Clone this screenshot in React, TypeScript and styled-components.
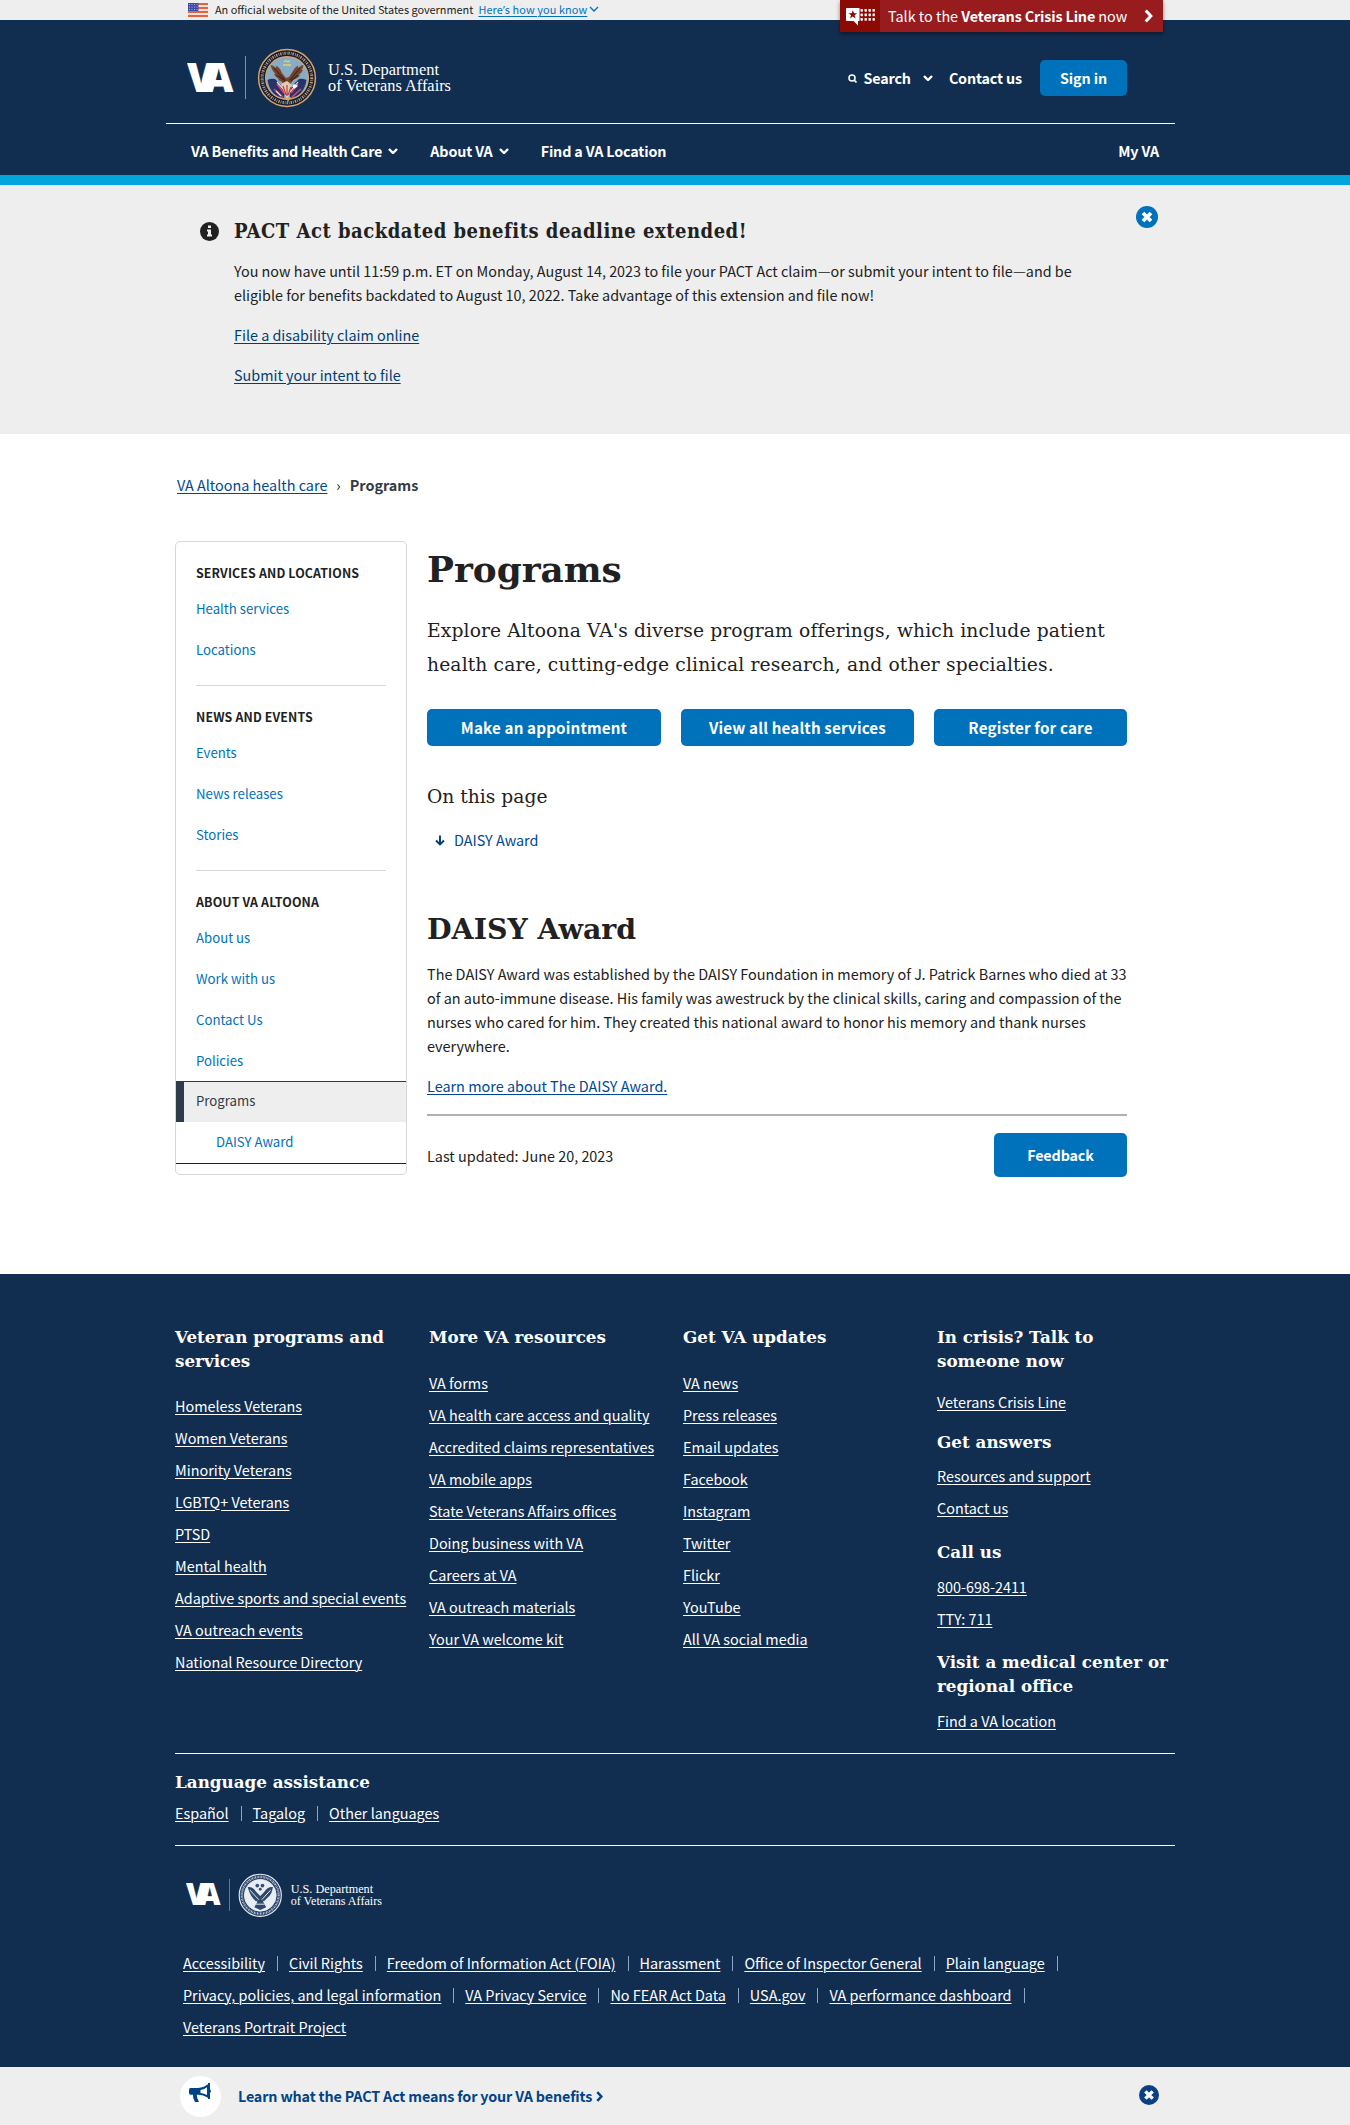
import React from "react";
import styled, { createGlobalStyle } from "styled-components";

const sans = `"Noto Sans CJK SC", "Open Sans", sans-serif`;
const slab = `"DejaVu Serif", serif`;
const slabNarrow = `"DejaVu Serif Condensed", "DejaVu Serif", serif`;

const GlobalStyle = createGlobalStyle`
  * { box-sizing: border-box; }
  body { margin: 0; background: #fff; color: #212121; font-family: ${sans}; font-size: 14.4px; line-height: 24px; }
  h1, h2, h3, h4, p, ul { margin: 0; padding: 0; }
  ul { list-style: none; }
  svg { display: block; flex: none; }
`;

/* ---------- shared ---------- */

const Link = styled.a<{ $color?: string }>`
  color: ${(p) => p.$color || "#004795"};
  text-decoration: underline;
  text-underline-offset: 2px;
  text-decoration-thickness: 1px;
  white-space: nowrap;
`;

const Button = styled.button<{ $w: number; $h: number; $size?: number; $ls?: number }>`
  width: ${(p) => p.$w}px;
  height: ${(p) => p.$h}px;
  padding: 0 0 ${(p) => (p.$size ? 2 : 1)}px;
  border: 0;
  border-radius: 5px;
  background: #0071bb;
  color: #fff;
  font: bold ${(p) => p.$size || 14.32}px/24px ${sans};
  letter-spacing: ${(p) => (p.$ls === undefined ? -0.13 : p.$ls)}px;
  white-space: nowrap;
`;

const Chevron = ({ w = 10, stroke = 2.4, color = "#fff" }: { w?: number; stroke?: number; color?: string }) => (
  <svg width={w} height={w * 0.65} viewBox="0 0 10 6.5">
    <path d="M1 1 L5 5 L9 1" fill="none" stroke={color} strokeWidth={stroke} />
  </svg>
);

const RightChevron = ({ w, h, color, stroke }: { w: number; h: number; color: string; stroke: number }) => (
  <svg width={w} height={h} viewBox="0 0 8 13">
    <path d="M1.4 1.4 L6.2 6.5 L1.4 11.6" fill="none" stroke={color} strokeWidth={stroke} />
  </svg>
);

const CloseIcon = ({ size, color }: { size: number; color: string }) => (
  <svg width={size} height={size} viewBox="0 0 22 22">
    <circle cx="11" cy="11" r="11" fill={color} />
    <path d="M7 7 L15 15 M15 7 L7 15" stroke="#fff" strokeWidth="3.8" />
  </svg>
);

/* ---------- government banner ---------- */

const GovBar = styled.div`
  height: 20px;
  padding: 0 0 1px 188px;
  display: flex;
  align-items: center;
  background: #eee;
  font-size: 10.9px;
  line-height: 19px;
  color: #212121;
  white-space: nowrap;
  & > svg:first-child { margin: 1px 7px 0 0; }
  & > a { margin: 0 2px 0 5px; letter-spacing: 0.1px; }
`;

const Apostrophe = styled.span`
  font-family: "Open Sans", sans-serif;
`;

const Flag = () => (
  <svg width="20" height="14" viewBox="0 0 20 14">
    <rect width="20" height="14" fill="#f4e3dc" />
    {[0, 4, 8, 12].map((y) => (
      <rect key={y} y={y} width="20" height="2" fill="#e8613f" />
    ))}
    <rect width="10.5" height="8" fill="#3b4ba8" />
    {[1.5, 4, 6.5].map((y) =>
      [1.5, 4, 6.5, 9].map((x) => <circle key={`${x}${y}`} cx={x} cy={y} r=".5" fill="#c9cfee" />)
    )}
  </svg>
);

/* ---------- crisis line ---------- */

const CrisisLine = styled.div`
  position: absolute;
  top: 0;
  left: 840px;
  width: 323px;
  height: 32px;
  display: flex;
  align-items: center;
  background: #981b1e;
  color: #fff;
  box-shadow: 0 2px 4px rgba(0, 0, 0, 0.45);
  white-space: nowrap;
`;

const CrisisIcon = styled.span`
  width: 40px;
  height: 32px;
  margin-right: 8px;
  padding: 8px 0 0 6px;
  background: #8b0a03;
`;

const CrisisText = styled.span`
  flex: none;
  width: 256px;
  & > b { letter-spacing: -0.17px; }
`;

/* ---------- header ---------- */

const Header = styled.header`
  height: 165px;
  padding: 0 175px 0 166px;
  background: #112e51;
  border-bottom: 10px solid #00a6dc;
  color: #fff;
  font-size: 14.32px;
  font-weight: bold;
  letter-spacing: -0.14px;
`;

const HeaderTop = styled.div`
  height: 104px;
  padding: 13px 48px 0 21px;
  border-bottom: 1px solid #fff;
  display: flex;
  align-items: center;
`;

const Tools = styled.div`
  margin-left: auto;
  display: flex;
  align-items: center;
  white-space: nowrap;
  & > span { margin-left: 6px; }
  & > span + svg { margin-left: 12px; }
  & > svg + span + svg + span { margin: 0 18px 0 16px; }
`;

const Nav = styled.nav`
  height: 51px;
  padding: 3px 16px 0 25px;
  display: flex;
  align-items: center;
  white-space: nowrap;
`;

const NavItem = styled.span<{ $gap?: number; $right?: boolean }>`
  display: flex;
  align-items: center;
  gap: 6px;
  margin-left: ${(p) => (p.$right ? "auto" : `${p.$gap || 0}px`)};
`;

const Ring = ({ mono }: { mono?: boolean }) => {
  const edge = mono ? "#e8edf4" : "#d9a566";
  const letter = mono ? "#c5d0de" : "#b9a07c";
  return (
    <g>
      <circle cx="30" cy="30" r="28.4" fill={mono ? "#2a4467" : "#141c33"} stroke={edge} strokeWidth="1.5" />
      <circle cx="30" cy="30" r="24.8" fill="none" stroke={letter} strokeWidth="3" strokeDasharray="1.3 1.2 .7 1" />
      <circle cx="30" cy="30" r="21.4" fill={mono ? "#e8edf4" : "#88abc6"} stroke={edge} strokeWidth="1.2" />
    </g>
  );
};

const ColorSeal = () => (
  <g>
    <Ring />
    <path d="M10.5 32 Q14 30 18 31 L28 41 L27 50 Q13 48 10.5 32Z" fill="#27346c" />
    <path d="M49.5 32 Q45 30 42 31 L32 41 L33 50 Q47 48 49.5 32Z" fill="#27346c" />
    <path d="M20 36 L27 45 M17 41 L26 49 M41 36 L34 45 M44 41 L35 49" stroke="#d8495d" strokeWidth="1.6" />
    <path d="M20 34 L28 43 M41 34 L33 44 M19 43 L24 48" stroke="#f0dfe4" strokeWidth="1.2" />
    <path d="M13.5 17 Q16 17 19 20 L19.5 17.5 Q23 20 25 25 L29 30 L32 29 L36 23 Q38 19 41 17.5 L41 20 Q44 17 46.5 17 Q46 20 44.5 22 L46 22 Q44 26 41.5 27 L43 27.5 Q40 31 36 32 L33 37 L26 36 Q25 33 21 32 L22 31 Q18 29 17 26 L18.5 26 Q15 23 13.5 17Z" fill="#75462b" />
    <path d="M17 20 L28 32 M20 27 L28 33 M43 20 L33 32 M41 27 L34 33" stroke="#3d241d" strokeWidth="1.1" />
    <path d="M24 36 L30 33 L35 37 L33 45 L30 52 L27 44Z" fill="#e2cfb0" />
    <path d="M26 38 L29 47 M30 37 L30 48 M34 39 L31 47" stroke="#c4393f" strokeWidth="1.2" />
    <path d="M37 36 L41 38 L37 41 L35 38Z" fill="#fff" />
    <path d="M29 50 L31 54 L34 49Z" fill="#d9a94b" />
    <path d="M27 14 L29 12.5 L31 14 L33 12.5 M26 17 L34 17" stroke="#dfd36e" strokeWidth="1.3" fill="none" />
  </g>
);

const MonoSeal = () => (
  <g>
    <Ring mono />
    <path d="M13 19 Q20 18 25 26 L30 31 L35 26 Q40 18 47 19 Q46 29 40 33 L34 39 L38 46 L30 50 L22 46 L26 39 Q17 34 13 19Z" fill="#2f496c" />
    <path d="M16 23 L28 36 M44 23 L32 36 M24 42 L36 42 M18 44 L26 38 M42 44 L34 38" stroke="#e8edf4" strokeWidth="1.3" />
    <circle cx="26" cy="17" r="2.5" fill="#38516f" />
    <circle cx="33" cy="17" r="2.5" fill="#38516f" />
    <circle cx="30" cy="22" r="2" fill="#38516f" />
  </g>
);

const Logo = ({ width, mono }: { width: number; mono?: boolean }) => (
  <svg width={width} height={(width * 60) / 268} viewBox="0 0 268 60">
    <text x="0" y="43.6" fill="#fff" fontFamily="Open Sans" fontWeight="800" fontSize="40.5" letterSpacing="0" textLength="46.5" lengthAdjust="spacing">
      VA
    </text>
    <rect x="58" y="8" width="1" height="43" fill="#8193aa" />
    <g transform="translate(70 0)">{mono ? <MonoSeal /> : <ColorSeal />}</g>
    <g fill="#fff" fontFamily="Liberation Serif" fontSize="16.5" fontWeight="400" letterSpacing="0">
      <text x="141" y="26.5" textLength="111" lengthAdjust="spacingAndGlyphs">
        U.S. Department
      </text>
      <text x="141" y="43" textLength="123" lengthAdjust="spacingAndGlyphs">
        of Veterans Affairs
      </text>
    </g>
  </svg>
);

/* ---------- promo banner ---------- */

const Promo = styled.section`
  height: 249px;
  padding: 0 192px 0 200px;
  display: flex;
  align-items: flex-start;
  background: #eee;
  & > svg:first-child { margin: 37px 15px 0 0; }
  & > svg:last-child { margin: 21px 0 0 auto; }
`;

const PromoBody = styled.div`
  width: 860px;
  padding-top: 33px;
  & p { margin-top: 16px; font-size: 14.37px; }
`;

const PromoTitle = styled.h3`
  margin-bottom: -1px;
  font: bold 20px/26px ${slabNarrow};
  letter-spacing: 0.5px;
`;

/* ---------- page ---------- */

const Breadcrumb = styled.nav`
  height: 107px;
  padding: 39px 0 0 177px;
  display: flex;
  gap: 9px;
  & > b { color: #323a45; }
`;

const Page = styled.div`
  padding: 0 223px 97px 175px;
  display: flex;
  align-items: flex-start;
  gap: 20px;
`;

const Sidebar = styled.aside`
  width: 232px;
  padding-bottom: 10px;
  border: 1px solid #d6d7d9;
  border-radius: 5px;
`;

const SideSection = styled.section<{ $last?: boolean }>`
  padding-top: 22px;
  & > h2 { margin: 0 0 6px 20px; font-size: 12.4px; line-height: 18px; letter-spacing: 0.13px; }
  &::after {
    content: "";
    display: ${(p) => (p.$last ? "none" : "block")};
    height: 1px;
    margin: 15px 20px 0;
    background: #d6d7d9;
  }
`;

const SideLink = styled.a<{ $active?: boolean; $child?: boolean }>`
  display: block;
  height: 41px;
  padding-left: ${(p) => (p.$child ? 40 : p.$active ? 12 : 20)}px;
  font-size: 13.2px;
  line-height: ${(p) => (p.$child || p.$active ? 40 : 41)}px;
  color: ${(p) => (p.$active ? "#323a45" : "#0071bb")};
  ${(p) =>
    p.$active &&
    `background: #eee; border-left: 8px solid #2e3b48; box-shadow: inset 0 1px #323a45;`}
  ${(p) => p.$child && `height: 42px; border-bottom: 1px solid #212121;`}
`;

const Content = styled.main`
  width: 700px;
  padding-top: 3px;
`;

const Title = styled.h1`
  font: bold 35.8px/50px ${slab};
`;

const Lead = styled.p`
  margin-top: 20px;
  font: 18.7px/34px ${slab};
  letter-spacing: 0.13px;
  white-space: nowrap;
`;

const ButtonRow = styled.div`
  margin-top: 27px;
  display: flex;
  gap: 20px;
`;

const JumpTitle = styled.h2`
  margin-top: 38px;
  font: 18.7px/26px ${slab};
`;

const JumpLink = styled.a`
  margin: 18px 0 0 8px;
  display: flex;
  align-items: center;
  gap: 9px;
  color: #004795;
`;

const SectionTitle = styled.h2`
  margin: 57px 0 13px;
  font: bold 28.4px/40px ${slab};
`;

const Text = styled.p`
  font-size: 14.43px;
  white-space: nowrap;
  & + & { margin-top: 16px; }
`;

const Updated = styled.div`
  margin-top: 16px;
  padding-top: 17px;
  border-top: 2px solid #aeb0b5;
  display: flex;
  justify-content: space-between;
  align-items: center;
  & > span { padding-top: 2px; }
`;

/* ---------- footer ---------- */

const Footer = styled.footer`
  height: 793px;
  padding: 52px 175px 0;
  background: #112e51;
  color: #fff;
`;

const Columns = styled.div`
  height: 428px;
  display: grid;
  grid-template-columns: 254px 254px 254px 238px;
  border-bottom: 1px solid #fff;
`;

const FootTitle = styled.h2<{ $top?: number; $bottom?: number }>`
  margin: ${(p) => p.$top || 0}px 0 ${(p) => (p.$bottom === undefined ? 21.5 : p.$bottom)}px;
  font: bold 16.75px/23.5px ${slab};
  white-space: nowrap;
`;

const FootList = styled.ul`
  display: grid;
  gap: 8px;
`;

const Language = styled.section`
  height: 92px;
  padding-top: 16.5px;
  border-bottom: 1px solid #fff;
`;

const Inline = styled.ul<{ $inset?: boolean }>`
  margin: ${(p) => (p.$inset ? "33px 0 0 8px" : 0)};
  display: flex;
  flex-wrap: wrap;
  row-gap: 8px;
`;

const InlineItem = styled.li<{ $bar: boolean }>`
  display: flex;
  align-items: center;
  &::after {
    content: "";
    display: ${(p) => (p.$bar ? "block" : "none")};
    width: 1px;
    height: 15px;
    margin: 1px 11px 0 12px;
    background: #8ba6ca;
  }
`;

const FooterLogo = styled.div`
  padding: 27px 0 0 11px;
`;

const BottomBar = styled.div`
  height: 58px;
  padding: 0 192px 0 180px;
  display: flex;
  align-items: center;
  background: #eee;
  color: #004386;
  font-size: 14.32px;
  font-weight: bold;
  letter-spacing: -0.15px;
  & > span { margin: 0 4px 0 17px; }
  & > svg:last-child { margin: 0 -1px 2px auto; }
`;

const Badge = styled.div`
  width: 41px;
  height: 41px;
  border-radius: 50%;
  background: #fff;
  display: flex;
  align-items: center;
  justify-content: center;
  padding-bottom: 6px;
`;

const sections = [
  { title: "SERVICES AND LOCATIONS", links: ["Health services", "Locations"] },
  { title: "NEWS AND EVENTS", links: ["Events", "News releases", "Stories"] },
  { title: "ABOUT VA ALTOONA", links: ["About us", "Work with us", "Contact Us", "Policies"] },
];

const programs = ["Homeless Veterans", "Women Veterans", "Minority Veterans", "LGBTQ+ Veterans", "PTSD", "Mental health", "Adaptive sports and special events", "VA outreach events", "National Resource Directory"];
const resources = ["VA forms", "VA health care access and quality", "Accredited claims representatives", "VA mobile apps", "State Veterans Affairs offices", "Doing business with VA", "Careers at VA", "VA outreach materials", "Your VA welcome kit"];
const updates = ["VA news", "Press releases", "Email updates", "Facebook", "Instagram", "Twitter", "Flickr", "YouTube", "All VA social media"];
const legal = ["Accessibility", "Civil Rights", "Freedom of Information Act (FOIA)", "Harassment", "Office of Inspector General", "Plain language", "Privacy, policies, and legal information", "VA Privacy Service", "No FEAR Act Data", "USA.gov", "VA performance dashboard", "Veterans Portrait Project"];

const LinkList = ({ items }: { items: string[] }) => (
  <FootList>
    {items.map((t) => (
      <li key={t}>
        <Link $color="#fff">{t}</Link>
      </li>
    ))}
  </FootList>
);

const InlineList = ({ items, inset }: { items: string[]; inset?: boolean }) => (
  <Inline $inset={inset}>
    {items.map((t, i) => (
      <InlineItem key={t} $bar={i < items.length - 1}>
        <Link $color="#fff">{t}</Link>
      </InlineItem>
    ))}
  </Inline>
);

export default function App() {
  return (
    <>
      <GlobalStyle />
      <GovBar>
        <Flag />
        An official website of the United States government
        <Link $color="#0071bb">Here<Apostrophe>’</Apostrophe>s how you know</Link>
        <Chevron w={10} stroke={1.3} color="#0071bb" />
      </GovBar>
      <CrisisLine>
        <CrisisIcon>
          <svg width="29" height="18" viewBox="0 0 29 18">
            <path d="M1 0h12.5v13h-1.5v4.5L7.5 13H1a1 1 0 0 1-1-1V1a1 1 0 0 1 1-1z" fill="#fff" />
            <path d="M6.8 2.3l1.2 3h3.1L8.6 7.2l1 3.2-2.8-1.9L4 10.4l1-3.2L2.5 5.3h3.1z" fill="#8b0a03" />
            {[1, 5.5, 10].map((y) => [15, 19, 23, 27].map((x) => <rect key={`${x}-${y}`} x={x - 0.5} y={y} width="2.4" height="2.7" rx=".6" fill="#fff" />))}
          </svg>
        </CrisisIcon>
        <CrisisText>
          Talk to the <b>Veterans Crisis Line</b> now
        </CrisisText>
        <RightChevron w={9} h={14} color="#fff" stroke={2.8} />
      </CrisisLine>

      <Header>
        <HeaderTop>
          <Logo width={268} />
          <Tools>
            <svg width="9" height="9" viewBox="0 0 9 9">
              <circle cx="4" cy="4" r="3" fill="none" stroke="#fff" strokeWidth="1.5" />
              <path d="M6 6 L8.5 8.5" stroke="#fff" strokeWidth="1.7" />
            </svg>
            <span>Search</span>
            <Chevron />
            <span>Contact us</span>
            <Button $w={87} $h={36}>Sign in</Button>
          </Tools>
        </HeaderTop>
        <Nav>
          <NavItem>VA Benefits and Health Care <Chevron /></NavItem>
          <NavItem $gap={32}>About VA <Chevron /></NavItem>
          <NavItem $gap={32}>Find a VA Location</NavItem>
          <NavItem $right>My VA</NavItem>
        </Nav>
      </Header>

      <Promo>
        <svg width="19" height="19" viewBox="0 0 19 19">
          <circle cx="9.5" cy="9.5" r="9.5" fill="#212121" />
          <path d="M8 3.5h3v2.6H8zM7 7.5h4v5h1v2H7v-2h1v-3H7z" fill="#eee" />
        </svg>
        <PromoBody>
          <PromoTitle>PACT Act backdated benefits deadline extended!</PromoTitle>
          <p>
            You now have until 11:59 p.m. ET on Monday, August 14, 2023 to file your PACT Act claim—or submit your intent to file—and be
            <br />
            eligible for benefits backdated to August 10, 2022. Take advantage of this extension and file now!
          </p>
          <p><Link $color="#003e73">File a disability claim online</Link></p>
          <p><Link $color="#003e73">Submit your intent to file</Link></p>
        </PromoBody>
        <CloseIcon size={22} color="#0071bb" />
      </Promo>

      <Breadcrumb>
        <Link>VA Altoona health care</Link>
        <span>›</span>
        <b>Programs</b>
      </Breadcrumb>

      <Page>
        <Sidebar>
          {sections.map((s, i) => (
            <SideSection key={s.title} $last={i === 2}>
              <h2>{s.title}</h2>
              {s.links.map((l) => (
                <SideLink key={l}>{l}</SideLink>
              ))}
            </SideSection>
          ))}
          <SideLink $active>Programs</SideLink>
          <SideLink $child>DAISY Award</SideLink>
        </Sidebar>
        <Content>
          <Title>Programs</Title>
          <Lead>
            Explore Altoona VA's diverse program offerings, which include patient
            <br />
            health care, cutting-edge clinical research, and other specialties.
          </Lead>
          <ButtonRow>
            <Button $w={234} $h={37} $size={15.2} $ls={0.15}>Make an appointment</Button>
            <Button $w={233} $h={37} $size={15.2} $ls={0.15}>View all health services</Button>
            <Button $w={193} $h={37} $size={15.2} $ls={0.15}>Register for care</Button>
          </ButtonRow>
          <JumpTitle>On this page</JumpTitle>
          <JumpLink>
            <svg width="10" height="11" viewBox="0 0 10 11">
              <path d="M5 0.5V9.5M1 5.5L5 9.5L9 5.5" fill="none" stroke="#004074" strokeWidth="1.9" />
            </svg>
            DAISY Award
          </JumpLink>
          <SectionTitle>DAISY Award</SectionTitle>
          <Text>
            The DAISY Award was established by the DAISY Foundation in memory of J. Patrick Barnes who died at 33
            <br />
            of an auto-immune disease. His family was awestruck by the clinical skills, caring and compassion of the
            <br />
            nurses who cared for him. They created this national award to honor his memory and thank nurses
            <br />
            everywhere.
          </Text>
          <Text><Link>Learn more about The DAISY Award.</Link></Text>
          <Updated>
            <span>Last updated: June 20, 2023</span>
            <Button $w={133} $h={44}>Feedback</Button>
          </Updated>
        </Content>
      </Page>

      <Footer>
        <Columns>
          <div>
            <FootTitle $bottom={20.5}>Veteran programs and<br />services</FootTitle>
            <LinkList items={programs} />
          </div>
          <div>
            <FootTitle>More VA resources</FootTitle>
            <LinkList items={resources} />
          </div>
          <div>
            <FootTitle>Get VA updates</FootTitle>
            <LinkList items={updates} />
          </div>
          <div>
            <FootTitle $bottom={16.5}>In crisis? Talk to<br />someone now</FootTitle>
            <LinkList items={["Veterans Crisis Line"]} />
            <FootTitle $top={17} $bottom={9.5}>Get answers</FootTitle>
            <LinkList items={["Resources and support", "Contact us"]} />
            <FootTitle $top={21} $bottom={10.5}>Call us</FootTitle>
            <LinkList items={["800-698-2411", "TTY: 711"]} />
            <FootTitle $top={20.5} $bottom={10.5}>Visit a medical center or<br />regional office</FootTitle>
            <LinkList items={["Find a VA location"]} />
          </div>
        </Columns>
        <Language>
          <FootTitle $bottom={7}>Language assistance</FootTitle>
          <InlineList items={["Español", "Tagalog", "Other languages"]} />
        </Language>
        <FooterLogo>
          <Logo width={199} mono />
        </FooterLogo>
        <InlineList items={legal} inset />
      </Footer>

      <BottomBar>
        <Badge>
          <svg width="25" height="22" viewBox="0 0 25 22">
            <path d="M2.5 6H10Q16 5.5 21 1.5V16.5Q16 13 10 12.8H8.8Q8.6 16 11 20H7Q4.5 16.5 5 12.8H2.5Q1 12.8 1 11V8Q1 6 2.5 6Z" fill="#004386" />
            <path d="M12.5 7.9Q16.5 7.2 19 5.2V13Q16.5 11.3 12.5 10.9Z" fill="#fff" />
            <path d="M21 1V17" stroke="#004386" strokeWidth="2" />
            <path d="M22 7.5Q24 9 22 11Z" fill="#004386" />
          </svg>
        </Badge>
        <span>Learn what the PACT Act means for your VA benefits</span>
        <RightChevron w={7} h={11} color="#004386" stroke={3} />
        <CloseIcon size={20} color="#0b4184" />
      </BottomBar>
    </>
  );
}
